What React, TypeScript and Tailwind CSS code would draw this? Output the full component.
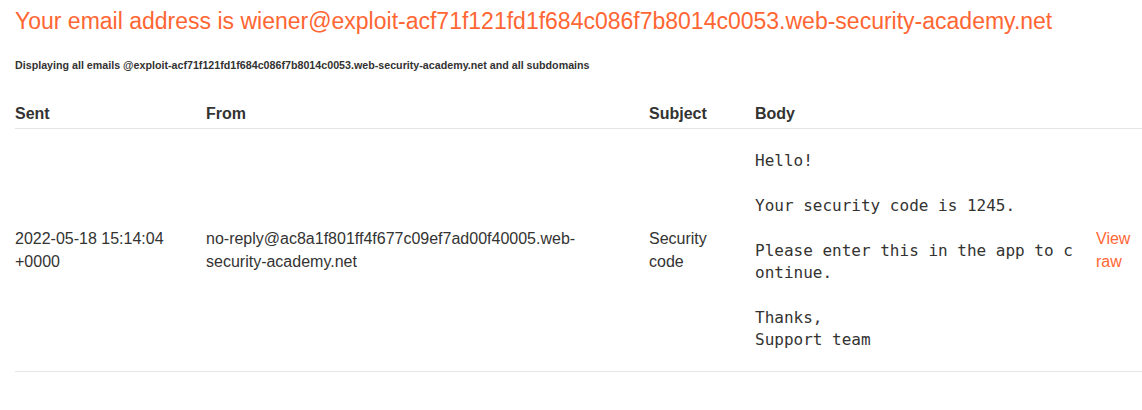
import React from "react";

export default function App() {
  return (
    <div className="bg-white text-[#333332] min-h-[410px]" style={{ fontFamily: '"Liberation Sans", Arial, sans-serif' }}>
      <div className="pl-[15px] pt-[8px]">
        <h1 className="text-[23px] leading-[27px] text-[#ff6633] font-normal m-0">
          Your email address is wiener@exploit-acf71f121fd1f684c086f7b8014c0053.web-security-academy.net
        </h1>
        <h4 className="text-[10.7px] font-bold mt-[22px] mb-0">
          Displaying all emails @exploit-acf71f121fd1f684c086f7b8014c0053.web-security-academy.net and all subdomains
        </h4>
        <table className="mt-[28px] w-[1127px] border-collapse text-[16px] leading-[23px]">
          <thead>
            <tr className="border-b border-[#e6e6e6]">
              <th className="text-left font-bold w-[191px] pt-[1px] pb-[3px] pr-[10px]">Sent</th>
              <th className="text-left font-bold w-[443px] pt-[1px] pb-[3px] pr-[10px]">From</th>
              <th className="text-left font-bold w-[106px] pt-[1px] pb-[3px] pr-[10px]">Subject</th>
              <th className="text-left font-bold w-[341px] pt-[1px] pb-[3px] pr-[10px]">Body</th>
              <th className="text-left font-bold pt-[1px] pb-[3px]"></th>
            </tr>
          </thead>
          <tbody>
            <tr className="border-b border-[#e6e6e6]">
              <td className="align-middle pr-[10px]">2022-05-18 15:14:04 +0000</td>
              <td className="align-middle pr-[40px]">no-reply@ac8a1f801ff4f677c09ef7ad00f40005.web-security-academy.net</td>
              <td className="align-middle pr-[10px]">Security code</td>
              <td className="align-middle pr-[19px] pt-[5px] pb-[3px]">
                <pre
                  className="my-[16px] text-[16px] leading-[22.4px] whitespace-pre-wrap break-all"
                  style={{ fontFamily: '"DejaVu Sans Mono", monospace' }}
                >{`Hello!

Your security code is 1245.

Please enter this in the app to continue.

Thanks,
Support team`}</pre>
              </td>
              <td className="align-middle">
                <a className="text-[#ff6633]">View raw</a>
              </td>
            </tr>
          </tbody>
        </table>
      </div>
    </div>
  );
}
